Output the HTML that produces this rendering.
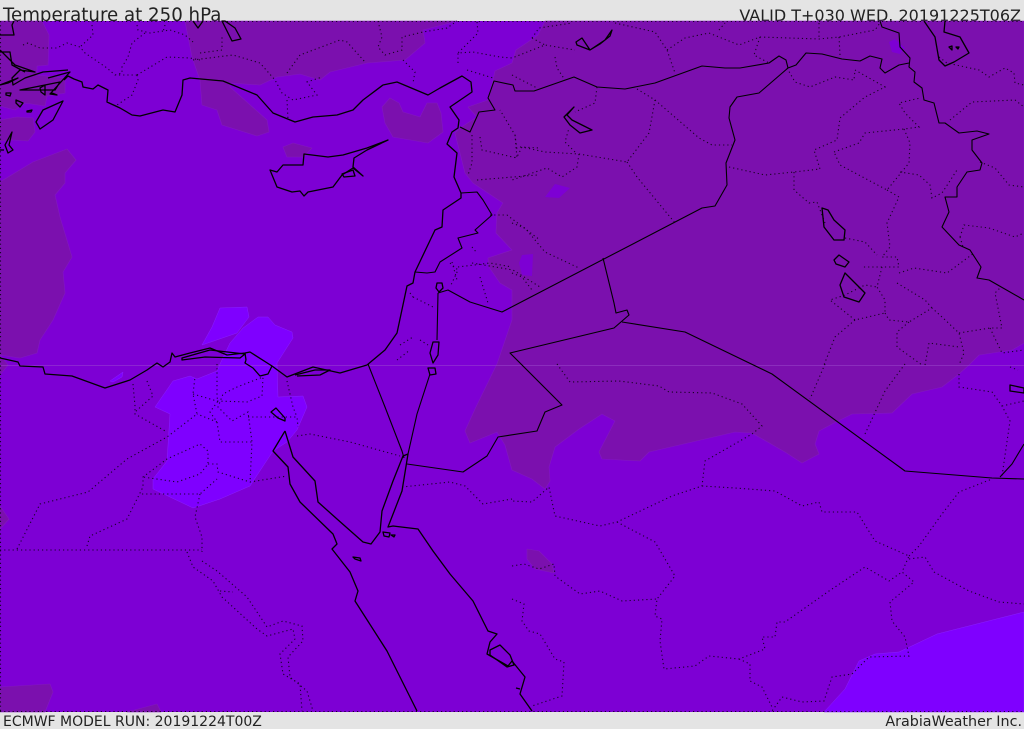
<!DOCTYPE html>
<html><head><meta charset="utf-8"><style>
html,body{margin:0;padding:0;background:#e4e4e4}
svg{display:block}
text{font-family:"DejaVu Sans",sans-serif;fill:#222}
.c{fill:none;stroke:#000;stroke-width:1.3;stroke-linejoin:round}
.b{fill:none;stroke:#000;stroke-width:1.1;stroke-linejoin:round}
.d{fill:none;stroke:#000;stroke-width:1.1;stroke-dasharray:1.2 3;opacity:.8}
.k{fill:#7b10ae;stroke:#8318c0;stroke-width:.6;stroke-linejoin:round}
.l{fill:#7f00ff;stroke:#8a20ff;stroke-width:.5;stroke-linejoin:round}
</style></head><body>
<svg width="1024" height="729" viewBox="0 0 1024 729" xmlns="http://www.w3.org/2000/svg">
<rect width="1024" height="729" fill="#e4e4e4"/>
<text x="3" y="21" font-size="18.2">Temperature at 250 hPa</text>
<text x="1021" y="21" font-size="16" text-anchor="end">VALID T+030 WED. 20191225T06Z</text>
<text x="3" y="726" font-size="14">ECMWF MODEL RUN: 20191224T00Z</text>
<text x="1022" y="726" font-size="14.3" text-anchor="end">ArabiaWeather Inc.</text>
<rect y="21" width="1024" height="691" fill="#7d00d4"/>
<g>
<path class="k" d="M545 21L538 35L528 42L516 50L512 63L495 71L493 80L488 100L468 107L477 117L460 128L455 133L458 145L465 173L473 183L503 203L497 213L496 233L512 250L488 258L489 267L500 283L512 290L512 320L497 364L476 407L465 431L470 443L497 432L505 445L512 470L532 479L545 489L550 481L549 467L555 447L579 429L602 414L615 421L599 452L602 459L640 461L649 452L735 432L752 433L785 452L802 463L819 454L815 444L819 431L832 424L852 414L892 413L912 394L942 387L959 374L969 365L979 355L1012 350L1024 343L1024 21Z"/>
<path class="k" d="M185 21L192 57L200 80L202 105L217 110L222 125L257 136L269 132L267 120L230 87L230 83L260 85L277 77L300 74L320 80L330 72L367 63L405 60L425 43L423 30L457 21Z"/>
<path class="k" d="M382 107L390 98L399 103L403 112L420 117L427 103L437 103L441 113L443 132L428 143L393 137L385 123Z"/>
<path class="k" d="M283 147L293 143L312 148L303 157L287 157Z"/>
<path class="k" d="M0 182L33 162L67 149L76 160L65 173L65 183L55 195L60 217L72 257L63 272L65 293L53 320L40 340L37 353L20 358L0 355Z"/>
<path class="k" d="M0 355L8 365L0 375Z"/>
<path class="k" d="M0 21L42 21L49 35L48 65L37 66L37 75L65 78L65 93L47 96L45 106L25 103L15 110L0 106Z"/>
<path class="k" d="M0 120L17 117L33 118L35 132L28 141L13 140L0 141Z"/>
<path class="k" d="M0 687L50 684L53 692L45 712L0 712Z"/>
<path class="k" d="M127 712L157 704L161 712Z"/>
<path class="k" d="M0 506L9 519L0 529Z"/>
<path class="k" d="M527 549L539 551L552 564L554 573L535 569L527 559Z"/>
<path fill="#7d00d4" d="M545 197L555 184L570 188L559 198ZM519 263L522 255L533 254L532 276L522 275ZM889 42L895 39L905 48L900 54L892 52Z"/>
<path class="l" d="M220 308L247 307L249 317L237 333L202 345L212 327Z"/>
<path class="l" d="M258 317L268 317L275 325L292 332L293 338L277 363L278 397L303 396L307 407L297 430L287 442L273 451L250 486L220 499L193 508L170 497L153 489L153 479L167 461L170 414L155 407L173 381L190 376L197 379L217 371L220 364L230 343L243 328Z"/>
<path class="l" d="M824 712L845 689L859 661L875 654L899 652L937 634L1024 612L1024 712Z"/>
<path class="l" d="M110 381L123 372L122 377L113 382Z"/>
</g>
<path d="M0 365.500H1024" stroke="#a050d0" stroke-width="1" opacity=".45"/>
<!-- dotted internal boundaries -->
<g class="d">
<path d="M0 21.500H1024M0 711.500H1024M.5 21V712"/>
<path d="M23 45L28 43L40 48L57 48L67 43L80 47L85 53L107 68L115 75L137 75"/>
<path d="M92 25L93 35L80 47M137 25L138 30L150 33L170 30L185 35L193 42M165 25L163 32"/>
<path d="M145 33L132 43L128 57L122 67L122 73L115 75M137 75L138 80L132 95L117 105M137 75L167 57L190 58L200 60"/>
<path d="M193 60L233 55L260 63L275 80L282 93L293 100L317 95L307 82L322 77M287 73L300 55L340 40L347 42L365 62M200 53L222 50L222 37"/>
<path d="M378 21L382 37L378 47L385 55L402 50L402 37L423 32L447 28L457 21M403 60L415 72L413 83M287 100L288 120"/>
<path d="M458 63L458 53L473 52L500 57L512 58L545 45L575 50M477 22L478 33L458 53M467 70L493 78"/>
<path d="M532 38L545 45M532 38L539 28L572 23M615 23L655 32L667 50L675 73M667 50L685 38L709 33L739 45L760 37L819 39L839 37L875 30L880 23M760 37L754 55L769 63M719 30L725 23M819 23L819 39M839 37L840 55"/>
<path d="M512 75L537 88M555 57L557 68L565 80M597 87L595 103L575 112M637 89L655 100L649 133L627 162L579 154L545 152L522 147L517 157L512 158M515 135L517 150"/>
<path d="M655 100L699 138L712 145L732 145M627 162L637 177L675 223M579 154L577 167L562 177L547 168L512 180M575 152L565 142L569 128"/>
<path d="M512 223L525 228L545 252L579 268M512 273L522 277L532 290"/>
<path d="M729 167L765 175L794 172L820 169L814 150L837 140L840 118L865 97L885 87L855 70M787 68L795 82L810 87L835 77L854 80L855 70"/>
<path d="M794 172L794 190L809 203L817 202L825 223"/>
<path d="M834 152L859 143L865 133L904 129L919 127L905 113L899 103L920 98M904 129L910 143L909 163L887 190L840 165L834 152M900 172L919 175L930 185L932 198L942 193L957 170"/>
<path d="M887 190L899 197L887 223L890 247L882 257L897 257L899 267L882 267L862 267M845 238L865 242L877 255M882 267L877 287L885 300L885 313L855 320L830 300L845 295L865 285L877 287"/>
<path d="M885 313L889 320L909 322L932 308L942 317L959 333L964 353L959 365M899 273L914 268L947 273L974 253M897 283L925 300L932 308M909 322L897 332L897 347L922 365M925 365L929 343L959 347M855 320L835 337L824 365"/>
<path d="M959 333L990 328L1002 328L995 293L1000 288M990 328L1002 353L1024 350M960 237L964 225L989 228L1015 237L1024 233M960 237L963 247M980 162L995 168L1009 185L1024 187M950 120L972 102L1015 100L1024 107M939 57L947 63L979 70L989 77L1005 68L1014 73L1015 83L1024 85"/>
<path d="M557 364L570 382L619 381L659 386L669 392L712 393L742 404L762 426L752 434L705 461L702 486L672 496L617 522L600 526L555 516L549 487L532 502L512 501"/>
<path d="M702 486L735 488L775 491L802 506L819 502L822 512L857 512L875 541L909 556L902 572M909 556L919 546L942 514L959 492L992 479M909 559L925 557L934 572L969 591L999 602L1024 604"/>
<path d="M617 522L655 542L675 576L657 599L655 616L662 619L660 641L664 669L695 666L709 656L739 659L765 649L762 637L775 637L777 622L785 622L829 591L865 567L889 581L902 572L914 582L890 602L892 621L905 637L909 656L869 657L852 674L832 677L824 701L802 702L782 697L772 711M739 659L750 664L750 681L762 687L772 707"/>
<path d="M512 566L524 564L539 569L554 564L555 576L580 594L600 591L622 601L657 599M512 599L524 604L522 621L529 631L540 634L555 659L564 662L562 696L532 706"/>
<path d="M825 364L810 399M905 364L885 391L865 434M959 374L959 387L992 392L1002 406L1010 421L1002 476M1002 406L1024 401M1010 367L1018 370"/>
<path d="M133 384L135 406L135 414L167 432M147 381L153 396L135 412M17 549L40 504L88 492L127 459L167 437L197 414L193 394L195 377"/>
<path d="M87 546L90 536L127 519L143 487L143 477L167 459L200 444L208 451L208 464L200 474L177 482L143 477M142 494L200 494L217 479M208 464L217 464L218 472L250 482L287 476M200 494L195 517L202 537L202 552M0 550L202 550"/>
<path d="M187 552L193 567L213 581L222 597L257 629L267 636L293 629L295 639L280 654L283 674L300 684L302 711M202 561L217 571L247 597L267 627L283 621L302 626L303 641L288 657L290 677L307 691L313 711M220 591L233 592"/>
<path d="M217 364L217 397L218 401L210 412L217 422L220 442L252 442L250 482M193 394L217 401L247 402L262 396L263 377L237 387L223 394L218 407L232 421L248 412L252 442M217 422L197 414M248 417L297 417L298 427M287 381L293 407L297 417"/>
<path d="M297 436L310 434L350 442L400 456M402 487L450 482L465 486L483 504L512 499"/>
<path d="M413 297L433 307M400 345L413 337M397 360L410 350M420 340L428 345M410 293L413 297"/>
<path d="M450 263L458 270L450 287M472 247L477 253M458 267L490 263L512 267M480 277L488 303M452 262L457 280"/>
<path d="M472 135L472 163L468 175M480 137L482 150L517 158L515 135L500 110M520 147L540 148M477 180L537 175M490 215L507 215L540 240M472 263L513 270L540 287"/>
</g>
<!-- international borders -->
<g class="b">
<path d="M415 272L427 273L435 272L440 262L462 248L458 238L478 233L475 230L492 215L483 200L477 192L461 193"/>
<path d="M460 127L470 132L479 112L495 110L488 98L494 81L513 85L515 91L534 91L574 77L597 87L625 89L655 83L702 66L725 68L740 68L769 63L779 56L786 60L788 68L796 65L806 53L822 54L842 59L860 61L870 56L882 59L880 68L885 73L899 65L909 63"/>
<path d="M880 21L882 27L899 33L900 47L910 58L909 67L915 72L914 82L922 88L924 100L934 103L939 123L945 123L959 133L977 131L989 134L972 140L972 150L982 163L980 170L967 172L957 187L957 197L945 197L949 212L942 227L959 245L970 250L981 267L977 278L989 280L1024 300"/>
<path d="M438 293L448 290L470 302L502 312L702 208L715 206L727 185L726 163L735 140L729 118L730 107L737 97L759 93L788 68"/>
<path d="M603 258L614 303L616 313L627 310L629 315L614 328L510 353L562 405L545 412L537 431L498 437L487 456L463 472L407 464"/>
<path d="M622 322L685 332L772 374L905 471L992 478L1024 479M1000 477L1012 464L1024 444"/>
<path d="M368 364L385 407L402 451L404 458"/>
<path d="M438 293L437 340M430 374L417 414L408 454"/>
</g>
<!-- coasts -->
<g class="c">
<path d="M64 80L68 76L74 79L82 82L83 87L93 89L98 85L108 90L107 102L120 108L132 115L140 116L163 110L175 112L182 95L183 80L190 78L223 81L257 95L273 113L295 122L313 117L337 115L353 110L363 100L383 85L397 82L428 95L440 88L462 76L471 82L472 92L450 107L459 120L458 128L452 132L447 144L457 153L454 177L461 193L461 198L443 210L442 227L435 230L415 272L413 283L407 286L397 333L385 350L367 365L340 373L313 367L287 377L272 366L250 352L245 353L227 355L210 348L190 353L175 357L172 353L170 362L163 367L157 363L147 370L130 380L105 388L72 376L45 374L43 367L20 366L18 362L0 358"/>
<path d="M246 360L245 363L253 368L260 376L268 374L272 366M245 353L246 360"/>
<path d="M182 358L210 350L245 354L240 358L205 357L182 360Z"/>
<path d="M295 375L315 370L330 370L320 375L297 376"/>
<path d="M285 431L273 451L288 467L290 484L300 502L333 534L337 544L332 549L350 572L358 591L355 601L387 651L417 711"/>
<path d="M285 431L293 457L315 481L318 502L337 519L363 542L371 544L380 532L382 511L393 481L403 456L408 454L402 491L388 527L393 526L418 529L433 551L450 574L473 601L488 631L497 634L490 642L487 654L508 666L512 661L525 677L520 694L532 711"/>
<path d="M490 650L500 645L510 655L514 665L507 667L490 655Z"/>
<path d="M388 140L367 148L343 155L328 157L304 154L303 165L283 165L277 172L270 170L277 187L292 192L300 191L304 196L308 192L333 187L342 175L353 168L363 176L353 167L354 158L367 150Z"/>
<path d="M342 174L353 170L355 176L344 177Z"/>
<path d="M63 101L43 110L36 122L40 129L53 120Z"/>
<path d="M68 70L43 72L25 78L13 85L12 78L20 70L35 72L15 65L8 58L0 50M0 35L14 35L12 25L14 21M0 52L10 52L12 65L25 72"/>
<path d="M0 85L18 78L8 83L0 85ZM20 90L60 82L55 90L20 90ZM50 94L57 95L52 93ZM48 78L70 72L50 94"/>
<path d="M12 132L5 145L8 153L13 150L9 145L12 132ZM0 150L4 150"/>
<path d="M6 93L11 93L10 96L6 95ZM16 103L20 107L23 103L16 100ZM27 111L32 110L31 112L27 112ZM40 88L45 85L45 95L41 92Z"/>
<path d="M193 21L198 28L203 21M222 21L232 41L241 39L235 28L225 21Z"/>
<path d="M576 42L582 38L590 50L605 40L612 30L610 36L600 44L590 50L577 45Z"/>
<path d="M574 107L564 117L570 125L580 133L592 130L584 126L572 120L567 115L574 107Z"/>
<path d="M822 208L824 227L834 240L844 240L845 230L834 220L828 210Z"/>
<path d="M834 260L839 255L849 262L845 267L836 264Z"/>
<path d="M845 273L840 285L844 297L859 302L865 293L852 280Z"/>
<path d="M924 21L935 37L939 60L945 66L954 62L969 53L960 37L944 32L945 21"/>
<path d="M949 47L952 46L952 50ZM956 47L959 47L958 49Z"/>
<path d="M433 342L430 353L433 363L438 355L439 342Z"/>
<path d="M437 283L442 283L443 288L439 292L436 288Z"/>
<path d="M428 368L435 368L436 374L430 375Z"/>
<path d="M271 412L276 408L285 418L285 421L278 418Z"/>
<path d="M353 557L360 558L361 561L355 559Z"/>
<path d="M383 532L390 533L389 537L384 536ZM391 535L395 535L394 537Z"/>
<path d="M1010 385L1024 388L1024 393L1010 391Z"/>
<path d="M516 688L520 689"/>
</g>
</svg>
</body></html>
